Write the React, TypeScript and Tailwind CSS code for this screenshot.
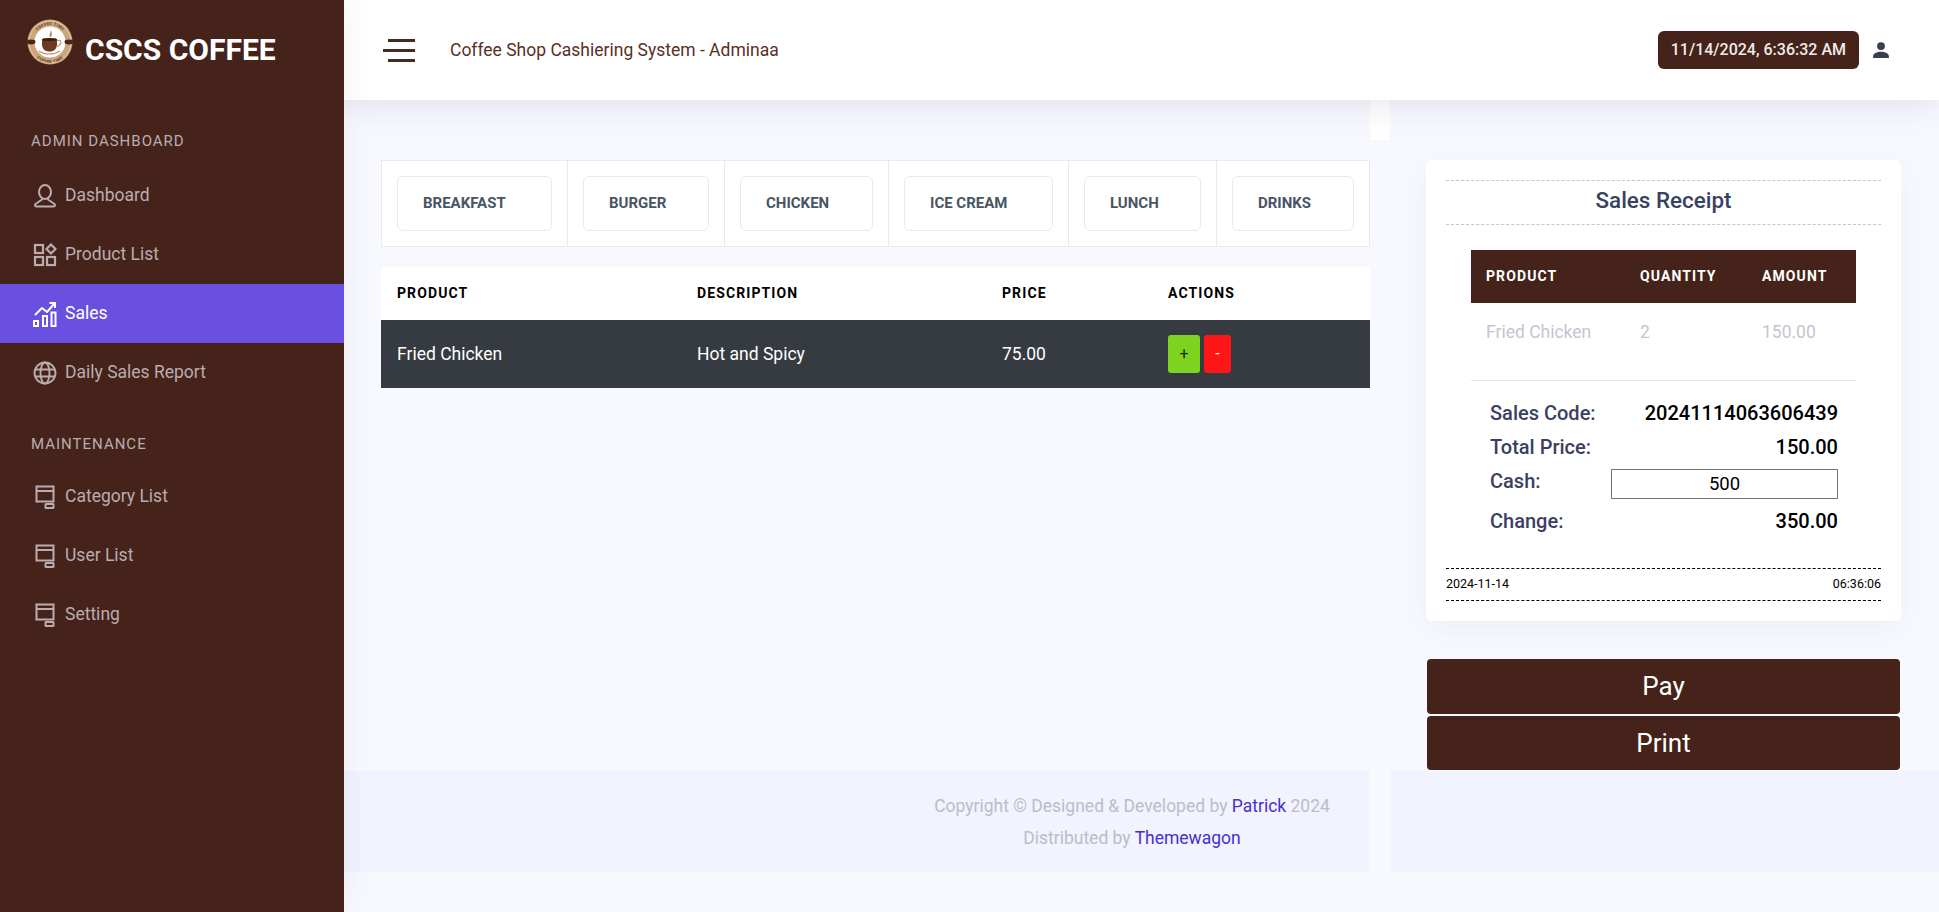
const font = "font-['Roboto',sans-serif]";

function Logo() {
  return (
    <svg viewBox="0 0 48 48" className="w-[48px] h-[48px] shrink-0">
      <circle cx="24" cy="24" r="22.5" fill="#c9a67c" />
      <circle cx="24" cy="24" r="21" fill="none" stroke="#f0dfc4" strokeWidth="0.6" />
      <circle cx="24" cy="24" r="15.5" fill="#ffffff" />
      <ellipse cx="5" cy="24" rx="4.5" ry="2.4" fill="#4a2617" />
      <ellipse cx="43" cy="24" rx="4.5" ry="2.4" fill="#4a2617" />
      <path d="M16 21h15v5c0 5-3 7.500-7.500 7.500S16 31 16 26z" fill="#6b3a1f" />
      <ellipse cx="23.500" cy="21.500" rx="7.500" ry="1.600" fill="#3a1d0d" />
      <path d="M31 22.500c4-1 5 2 3 4s-3 2-4 2" fill="none" stroke="#b58c63" strokeWidth="1.100" />
      <path d="M13 33c5 4 15 4 21 0" fill="none" stroke="#b58c63" strokeWidth="1.200" />
      <path d="M24 19c-2-3 2-4 0-7 3 2 2 5 1 7" fill="#b58c63" />
      <path id="logoTop" d="M7 24a17 17 0 0 1 34 0" fill="none" />
      <path id="logoBottom" d="M5 26a19 19 0 0 0 38 0" fill="none" />
      <text fontSize="4" fontWeight="700" fill="#5a3420" fontFamily="Roboto, sans-serif" letterSpacing="0.4">
        <textPath href="#logoTop" startOffset="50%" textAnchor="middle">COFFEE TIME</textPath>
      </text>
      <text fontSize="4" fontWeight="700" fill="#5a3420" fontFamily="Roboto, sans-serif" letterSpacing="0.4">
        <textPath href="#logoBottom" startOffset="50%" textAnchor="middle">COFFEE TIME</textPath>
      </text>
    </svg>
  );
}

function PersonIcon() {
  return (
    <svg viewBox="0 0 24 24" className="w-[24px] h-[24px]" fill="none" stroke="currentColor" strokeWidth="2">
      <ellipse cx="12" cy="8" rx="6" ry="7" />
      <path d="M9 14v1.500L2.500 20c-1 .8-.6 2.500.8 2.500h17.400c1.400 0 1.800-1.700.8-2.500L15 15.500V14" strokeLinejoin="round" />
    </svg>
  );
}

function GridIcon() {
  return (
    <svg viewBox="0 0 24 24" className="w-[24px] h-[24px]" fill="none" stroke="currentColor" strokeWidth="2.200">
      <rect x="2" y="2" width="8" height="8" />
      <rect x="2" y="14" width="8" height="8" />
      <rect x="14" y="14" width="8" height="8" />
      <path d="M18 1.500 22.500 6 18 10.500 13.500 6z" />
    </svg>
  );
}

function ChartIcon() {
  return (
    <svg viewBox="0 0 24 26" className="w-[24px] h-[26px]" fill="none" stroke="currentColor" strokeWidth="2">
      <rect x="1" y="20" width="4" height="5" />
      <rect x="10" y="15" width="4" height="10" />
      <rect x="18.500" y="11.500" width="4" height="13.500" />
      <path d="M2 14 9 7l5 4 7-8" strokeLinejoin="round" />
      <path d="M16.500 2H22v5" />
    </svg>
  );
}

function GlobeIcon() {
  return (
    <svg viewBox="0 0 24 24" className="w-[24px] h-[24px]" fill="none" stroke="currentColor" strokeWidth="1.900">
      <circle cx="12" cy="12" r="10.500" />
      <ellipse cx="12" cy="12" rx="4.500" ry="10.500" />
      <path d="M2.500 8.500h19M2.500 15.500h19" />
    </svg>
  );
}

function WindowIcon() {
  return (
    <svg viewBox="0 0 20 24" className="ml-[2px] w-[20px] h-[24px]" fill="none" stroke="currentColor" strokeWidth="2">
      <rect x="1.500" y="1.500" width="17" height="15" />
      <path d="M1.500 6h17" />
      <rect x="10.500" y="19" width="8" height="4" rx="0.500" />
    </svg>
  );
}

function NavItem({ icon, label, active }: { icon: React.ReactNode; label: string; active?: boolean }) {
  return (
    <a className={`flex items-center h-[59px] pl-[33px] text-[17.5px] ${active ? "bg-[#6a50e0] text-white" : "text-[#b9adb0]"}`}>
      <span className="w-[32px] flex items-center">{icon}</span>
      {label}
    </a>
  );
}

function Sidebar() {
  return (
    <aside className="w-[344px] shrink-0 min-h-[912px] bg-[#45231a] shadow-[0_0_30px_rgba(82,63,105,0.08)] relative z-10">
      <div className="h-[100px] flex items-start pl-[26px] pt-[18px] gap-[11px]">
        <Logo />
        <span className="text-white text-[30px] font-bold leading-[64px]">CSCS COFFEE</span>
      </div>
      <div className="pt-[32px]">
        <h6 className="pl-[31px] text-[15px] leading-[18px] tracking-[1px] text-[#b9adb0] mb-[16px]">ADMIN DASHBOARD</h6>
        <NavItem icon={<PersonIcon />} label="Dashboard" />
        <NavItem icon={<GridIcon />} label="Product List" />
        <NavItem icon={<ChartIcon />} label="Sales" active />
        <NavItem icon={<GlobeIcon />} label="Daily Sales Report" />
      </div>
      <div className="pt-[33px]">
        <h6 className="pl-[31px] text-[15px] leading-[18px] tracking-[1px] text-[#b9adb0] mb-[14px]">MAINTENANCE</h6>
        <NavItem icon={<WindowIcon />} label="Category List" />
        <NavItem icon={<WindowIcon />} label="User List" />
        <NavItem icon={<WindowIcon />} label="Setting" />
      </div>
    </aside>
  );
}

function Header() {
  return (
    <header className="h-[100px] bg-white flex items-center shadow-[0_8px_30px_rgba(82,63,105,0.12)] relative z-[5]">
      <div className="ml-[39px] w-[32px] flex flex-col items-end gap-[7px]">
        <span className="block h-[3px] w-[27px] bg-[#4a2a20]" />
        <span className="block h-[3px] w-[32px] bg-[#4a2a20]" />
        <span className="block h-[3px] w-[27px] bg-[#4a2a20]" />
      </div>
      <span className="ml-[35px] text-[17.5px] text-[#5a2f26]">Coffee Shop Cashiering System - Adminaa</span>
      <div className="ml-auto flex items-center mr-[49px]">
        <span className="h-[38px] px-[13px] flex items-center rounded-[6px] bg-[#45231a] text-[#f1ecea] text-[16px] font-medium">11/14/2024, 6:36:32 AM</span>
        <svg viewBox="0 0 16 16" className="ml-[13px] w-[18px] h-[18px] text-[#36404f]" fill="currentColor">
          <circle cx="8" cy="4.500" r="3.500" />
          <path d="M1 15v-1.500C1 11 4.500 9.500 8 9.500s7 1.500 7 4V15z" />
        </svg>
      </div>
    </header>
  );
}

const categories = [
  { name: "BREAKFAST", cell: "w-[186px]", btn: "w-[155px]" },
  { name: "BURGER", cell: "w-[157px]", btn: "w-[126px]" },
  { name: "CHICKEN", cell: "w-[164px]", btn: "w-[133px]" },
  { name: "ICE CREAM", cell: "w-[180px]", btn: "w-[149px]" },
  { name: "LUNCH", cell: "w-[148px]", btn: "w-[117px]" },
  { name: "DRINKS", cell: "w-[155px] border-r-0", btn: "w-[122px]" },
];

function CategoryBar() {
  return (
    <div className="flex h-[87px] bg-white border border-[#e9e9ec]">
      {categories.map((c) => (
        <div key={c.name} className={`${c.cell} shrink-0 h-full flex items-center pl-[15px] border-r border-[#e9e9ec]`}>
          <button className={`${c.btn} h-[55px] rounded-[6px] border border-[#e9e9ec] text-left pl-[25px] text-[15px] font-bold text-[#495464]`}>
            {c.name}
          </button>
        </div>
      ))}
    </div>
  );
}

function ProductTable() {
  return (
    <table className="w-full table-fixed mt-[20px] text-left">
      <colgroup>
        <col className="w-[300px]" />
        <col className="w-[306px]" />
        <col className="w-[166px]" />
        <col />
      </colgroup>
      <thead>
        <tr className="h-[53px] bg-white text-black text-[14px] font-bold tracking-[1.1px]">
          <th className="pl-[16px] font-bold">PRODUCT</th>
          <th className="pl-[16px] font-bold">DESCRIPTION</th>
          <th className="pl-[15px] font-bold">PRICE</th>
          <th className="pl-[15px] font-bold">ACTIONS</th>
        </tr>
      </thead>
      <tbody>
        <tr className="h-[68px] bg-[#363a41] text-white text-[17.5px]">
          <td className="pl-[16px]">Fried Chicken</td>
          <td className="pl-[16px]">Hot and Spicy</td>
          <td className="pl-[15px]">75.00</td>
          <td className="pl-[15px]">
            <div className="flex gap-[4px]">
              <button className="w-[32px] h-[38px] rounded-[3px] bg-[#7ed321] text-[#1d2b12] text-[16px]">+</button>
              <button className="w-[27px] h-[38px] rounded-[3px] bg-[#ff1616] text-white text-[16px]">-</button>
            </div>
          </td>
        </tr>
      </tbody>
    </table>
  );
}

function Footer({ children }: { children?: React.ReactNode }) {
  return <footer className="h-[101px] bg-[#f1f3fe] text-[17.5px] leading-[32px] text-[#bdbcc8]">{children}</footer>;
}

function SummaryRow({ label, value }: { label: string; value: string }) {
  return (
    <div className="flex items-center justify-between h-[34px]">
      <span className="text-[20px] font-medium text-[#3a3f63]">{label}</span>
      <span className="text-[20px] font-medium text-black">{value}</span>
    </div>
  );
}

function Receipt() {
  return (
    <div className="w-[475px] h-[461px] bg-white rounded-[6px] shadow-[0_8px_30px_rgba(82,63,105,0.06)] px-[20px] pt-[20px]">
      <h4 className="h-[45px] border-y border-dashed border-[#c5c5cc] text-center text-[22.4px] font-medium leading-[39px] text-[#374160]">Sales Receipt</h4>
      <div className="mx-[25px] mt-[25px]">
        <table className="w-[385px] table-fixed text-left">
          <colgroup>
            <col className="w-[154px]" />
            <col className="w-[122px]" />
            <col />
          </colgroup>
          <thead>
            <tr className="h-[53px] bg-[#45231a] text-white text-[14px] tracking-[1.1px]">
              <th className="pl-[15px] font-bold">PRODUCT</th>
              <th className="pl-[15px] font-bold">QUANTITY</th>
              <th className="pl-[15px] font-bold">AMOUNT</th>
            </tr>
          </thead>
          <tbody>
            <tr className="h-[77px] border-b border-[#e6e6e9] text-[17.5px] text-[#c3c6d2] align-top">
              <td className="pl-[15px] pt-[16px]">Fried Chicken</td>
              <td className="pl-[15px] pt-[16px]">2</td>
              <td className="pl-[15px] pt-[16px]">150.00</td>
            </tr>
          </tbody>
        </table>
        <div className="pl-[19px] pr-[18px] pt-[15px]">
          <SummaryRow label="Sales Code:" value="20241114063606439" />
          <SummaryRow label="Total Price:" value="150.00" />
          <div className="flex justify-between h-[40px]">
            <span className="text-[20px] font-medium text-[#3a3f63] leading-[34px]">Cash:</span>
            <input readOnly value="500" className="w-[227px] h-[30px] mt-[5px] border border-[#767676] text-center text-[18.5px] text-black outline-none" />
          </div>
          <SummaryRow label="Change:" value="350.00" />
        </div>
      </div>
      <div className="mt-[30px] h-[33px] border-y border-dashed border-black flex items-center justify-between text-[12.5px] text-black">
        <span>2024-11-14</span>
        <span>06:36:06</span>
      </div>
    </div>
  );
}

export default function App() {
  return (
    <div className={`${font} flex min-h-[912px] bg-[#f8f9ff] overflow-hidden`}>
      <Sidebar />
      <main className="flex-1 min-w-0 flex flex-col">
        <Header />
        <div className="flex h-[812px]">
          <section className="w-[1026px] shrink-0 flex flex-col">
            <div className="pt-[60px] pl-[37px]">
              <CategoryBar />
              <ProductTable />
            </div>
            <div className="mt-auto">
              <Footer>
                <div className="pt-[19px] pl-[550px] text-center">
                  <p>Copyright © Designed &amp; Developed by <a className="text-[#4a2fd0]">Patrick</a> 2024</p>
                  <p>Distributed by <a className="text-[#4a2fd0]">Themewagon</a></p>
                </div>
              </Footer>
              <div className="h-[40px]" />
            </div>
          </section>
          <div className="w-[20px] shrink-0">
            <div className="h-[40px] bg-white" />
          </div>
          <section className="flex-1 min-w-0 flex flex-col">
            <div className="pt-[60px] pl-[36px]">
              <Receipt />
              <div className="mt-[38px] ml-[1px] w-[473px] flex flex-col gap-[2px]">
                <button className="h-[55px] rounded-[4px] bg-[#45231a] text-white text-[26px]">Pay</button>
                <button className="h-[54px] rounded-[4px] bg-[#45231a] text-white text-[26px]">Print</button>
              </div>
            </div>
            <div className="mt-auto">
              <Footer />
              <div className="h-[40px]" />
            </div>
          </section>
        </div>
      </main>
    </div>
  );
}
